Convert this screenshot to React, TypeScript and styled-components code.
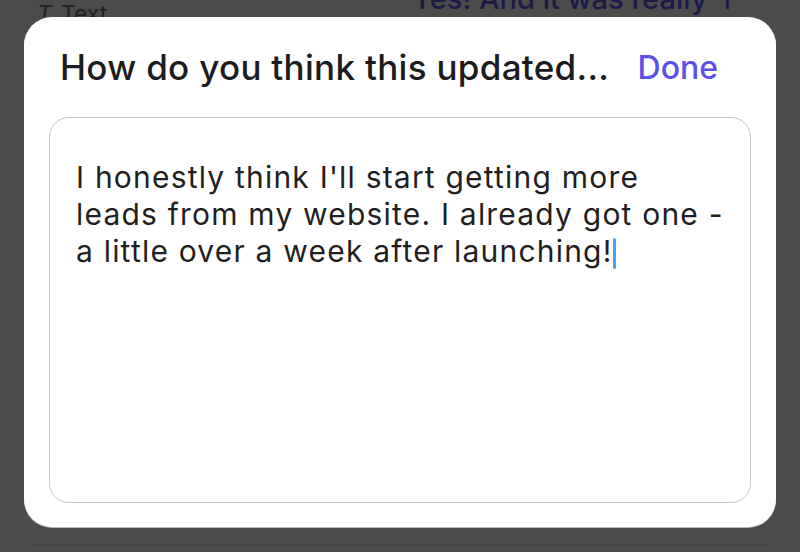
import React from "react";
import styled, { createGlobalStyle } from "styled-components";

const Global = createGlobalStyle`
  html, body { margin: 0; padding: 0; background: #4b4b4b; }
  body { width: 800px; height: 552px; overflow: hidden; font-family: Inter, "Noto Sans", sans-serif; }
`;

const Screen = styled.div`
  width: 800px;
  height: 552px;
  display: flex;
  flex-direction: column;
  background: #4b4b4b;
`;

const Backdrop = styled.div`
  height: 17px;
  overflow: hidden;
  display: flex;
  align-items: flex-end;
  justify-content: space-between;
  padding: 0 60px 0 37px;
`;

const BackLabel = styled.div`
  display: flex;
  align-items: flex-end;
  gap: 9px;
  font-size: 23px;
  line-height: 24px;
  height: 24px;
  margin-bottom: -9px;
  color: #222;
`;

const BackMessage = styled.div`
  font-size: 29px;
  line-height: 29px;
  margin-bottom: 4px;
  color: #1d1a48;
  font-weight: 500;
`;

const Card = styled.div`
  margin: 0 24px;
  height: 510px;
  box-sizing: border-box;
  background: #fff;
  border-radius: 28px;
  padding: 0 25px 24px;
  display: flex;
  flex-direction: column;
  box-shadow: 0 1px 0 #b9bcc4;
`;

const Header = styled.div`
  height: 100px;
  display: flex;
  align-items: center;
  justify-content: space-between;
  padding: 0 33px 0 11px;
`;

const Title = styled.h1`
  margin: 0;
  font-size: 35px;
  font-weight: 500;
  color: #1c1c1e;
  letter-spacing: 0.3px;
`;

const DoneButton = styled.button`
  border: none;
  background: none;
  padding: 0;
  font-family: inherit;
  font-size: 32px;
  font-weight: 500;
  color: #5b50ea;
`;

const Field = styled.div`
  flex: 1;
  border: 1px solid #c3c6cf;
  border-radius: 20px;
  padding: 41px 20px 40px 26px;
  font-size: 30px;
  line-height: 37px;
  letter-spacing: 1.2px;
  color: #1f1f21;
`;

const Caret = styled.span`
  display: inline-block;
  width: 3px;
  height: 31px;
  background: #4aa3f2;
  border-radius: 2px;
  vertical-align: -7px;
  margin-left: 0px;
`;

const Divider = styled.div`
  margin: 17px 32px 0;
  height: 1px;
  background: #444;
`;

export default function App() {
  return (
    <Screen>
      <Global />
      <Backdrop>
        <BackLabel>
          <span style={{ fontStyle: "italic" }}>T</span>
          <span>Text</span>
        </BackLabel>
        <BackMessage>Yes! And it was really ↑</BackMessage>
      </Backdrop>
      <Card>
        <Header>
          <Title>How do you think this updated...</Title>
          <DoneButton>Done</DoneButton>
        </Header>
        <Field>
          I honestly think I'll start getting more leads from my website. I already got one - a little over a week after launching!
          <Caret />
        </Field>
      </Card>
      <Divider />
    </Screen>
  );
}
